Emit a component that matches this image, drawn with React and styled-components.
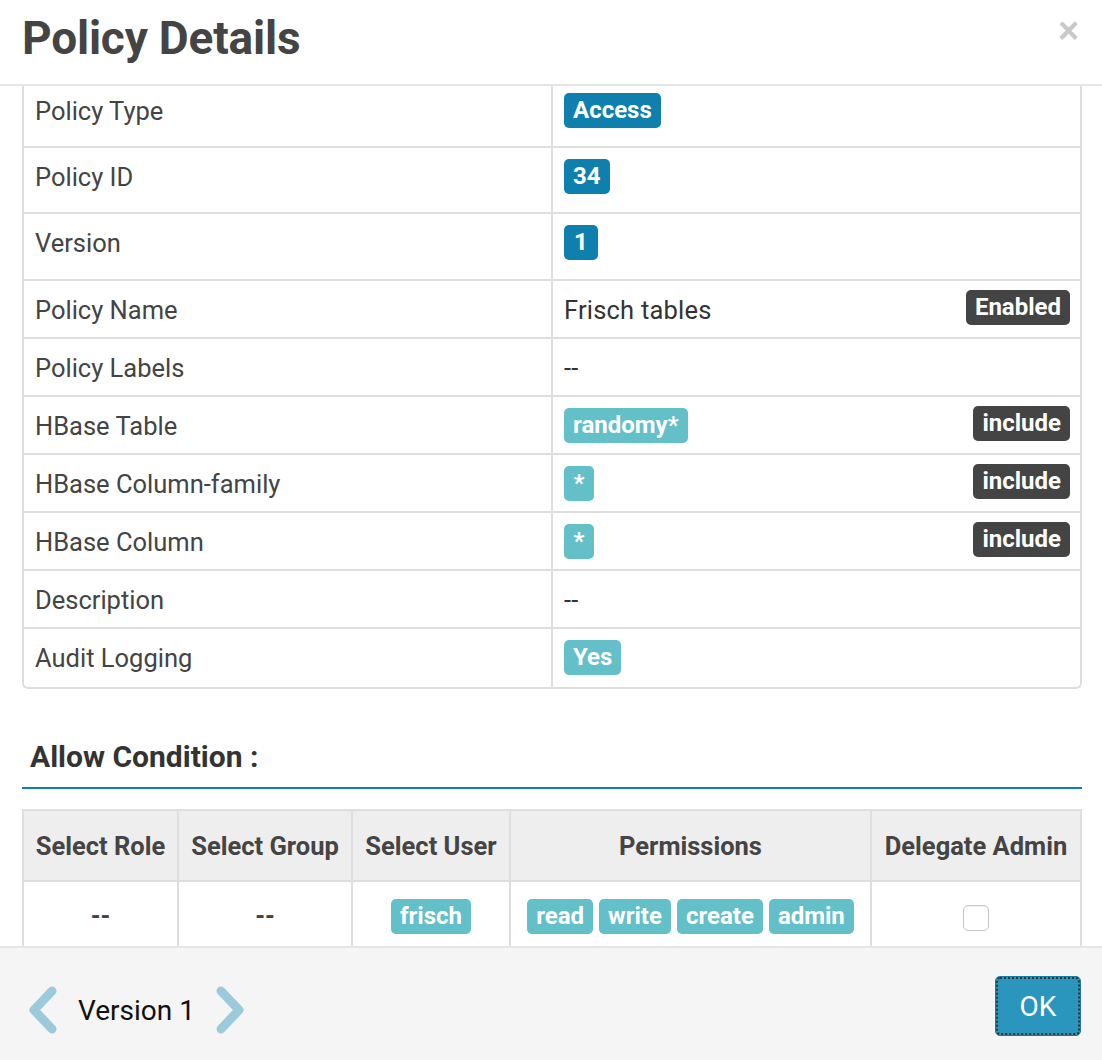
import React from 'react';
import styled, { createGlobalStyle } from 'styled-components';

const GlobalStyle = createGlobalStyle`
  html, body {
    margin: 0;
    padding: 0;
    background: #fff;
  }
  body {
    font-family: Roboto, "Liberation Sans", Arial, sans-serif;
    color: #444;
  }
`;

const Modal = styled.div`
  width: 1102px;
  height: 1060px;
  display: flex;
  flex-direction: column;
  background: #fff;
  overflow: hidden;
`;

const Header = styled.div`
  height: 84px;
  flex: none;
  display: flex;
  align-items: center;
  justify-content: space-between;
  padding: 0 22px;
  border-bottom: 2px solid #e5e5e5;
  box-sizing: content-box;
`;

const Title = styled.h3`
  margin: 0;
  margin-top: -8px;
  font-size: 46px;
  font-weight: 700;
  color: #444;
  letter-spacing: -0.2px;
`;

const Close = styled.button`
  border: 0;
  background: none;
  padding: 0;
  margin-top: -22px;
  margin-right: 1px;
  font-family: "Liberation Sans", Arial, sans-serif;
  font-size: 36px;
  font-weight: 700;
  line-height: 1;
  color: #c8c8c8;
  cursor: pointer;
`;

const Body = styled.div`
  flex: 1;
  overflow: hidden;
  padding: 0 20px 0 22px;
`;

const DetailBox = styled.div`
  margin-top: -4px;
  display: grid;
  grid-template-columns: 529px 1fr;
  border: 2px solid #dedede;
  border-top: 0;
  border-radius: 0 0 6px 6px;
`;

const Cell = styled.div`
  box-sizing: border-box;
  height: ${(p) => p.$h}px;
  padding: 11px 10px 0 11px;
  border-bottom: ${(p) => (p.$last ? '0' : '2px solid #dedede')};
  border-right: ${(p) => (p.$label ? '2px solid #dedede' : '0')};
  font-size: 25.5px;
  line-height: 36px;
  color: #444;
  display: flex;
  align-items: flex-start;
  justify-content: space-between;
`;

const ValueText = styled.span`
  color: #333;
  letter-spacing: 0.2px;
`;

const colors = {
  blue: '#0f7fad',
  teal: '#63c0c8',
  dark: '#444',
};

const Badge = styled.span`
  display: inline-block;
  box-sizing: border-box;
  height: 35px;
  min-width: ${(p) => (p.$min ? p.$min : 0)}px;
  text-align: center;
  padding: 0 9px;
  margin-top: ${(p) => (p.$up ? -2 : 0)}px;
  border-radius: 5px;
  background: ${(p) => colors[p.$tone]};
  color: #fff;
  font-weight: 700;
  font-size: 24px;
  line-height: 35px;
  white-space: nowrap;
`;

const SectionTitle = styled.h4`
  margin: 50px 0 20px;
  padding: 0 0 12px 8px;
  font-size: 30px;
  line-height: 36px;
  font-weight: 700;
  color: #333;
  border-bottom: 2px solid #0f7fad;
`;

const PermTable = styled.table`
  width: 100%;
  border-collapse: collapse;
  table-layout: fixed;
  border: 2px solid #dedede;
`;

const Th = styled.th`
  height: 69px;
  padding: 0 4px;
  background: #eee;
  border: 2px solid #dedede;
  font-size: 25.5px;
  font-weight: 700;
  color: #444;
  text-align: center;
  white-space: nowrap;
`;

const Td = styled.td`
  height: 68px;
  padding: 0 4px;
  border: 2px solid #dedede;
  text-align: center;
  vertical-align: middle;
  font-size: 25px;
  font-weight: 700;
  color: #444;
`;

const Chips = styled.div`
  display: flex;
  justify-content: center;
  gap: 6px;
`;

const Check = styled.span`
  display: inline-block;
  width: 24px;
  height: 24px;
  border: 1px solid #c6c6c6;
  border-radius: 5px;
  background: #fff;
  box-shadow: inset 0 1px 2px rgba(0, 0, 0, 0.06);
  vertical-align: middle;
`;

const Footer = styled.div`
  height: 112px;
  flex: none;
  display: flex;
  align-items: center;
  justify-content: space-between;
  padding: 0 21px 0 26px;
  background: #f5f5f5;
  border-top: 2px solid #e5e5e5;
`;

const Pager = styled.div`
  display: flex;
  align-items: center;
  gap: 18px;
  margin-top: 12px;
  font-size: 28px;
  color: #111;
`;

const Chevron = styled.svg`
  width: 34px;
  height: 48px;
  display: block;
`;

const OkButton = styled.button`
  width: 86px;
  height: 60px;
  margin-top: 4px;
  background: #2a96bd;
  border: 1px solid #1a7ca0;
  border-radius: 5px;
  outline: 2px dotted #333;
  outline-offset: -3px;
  color: #fff;
  font-family: Roboto, "Liberation Sans", Arial, sans-serif;
  font-size: 28px;
  cursor: pointer;
`;

const rows = [
  { label: 'Policy Type', h: 66, value: <Badge $tone="blue">Access</Badge> },
  { label: 'Policy ID', h: 66, value: <Badge $tone="blue">34</Badge> },
  { label: 'Version', h: 67, value: <Badge $tone="blue" $min={34}>1</Badge> },
  {
    label: 'Policy Name',
    h: 58,
    value: <ValueText>Frisch tables</ValueText>,
    right: <Badge $tone="dark" $up>Enabled</Badge>,
  },
  { label: 'Policy Labels', h: 58, value: <ValueText>--</ValueText> },
  {
    label: 'HBase Table',
    h: 58,
    value: <Badge $tone="teal">randomy*</Badge>,
    right: <Badge $tone="dark" $up>include</Badge>,
  },
  {
    label: 'HBase Column-family',
    h: 58,
    value: <Badge $tone="teal" $min={30}>*</Badge>,
    right: <Badge $tone="dark" $up>include</Badge>,
  },
  {
    label: 'HBase Column',
    h: 58,
    value: <Badge $tone="teal" $min={30}>*</Badge>,
    right: <Badge $tone="dark" $up>include</Badge>,
  },
  { label: 'Description', h: 58, value: <ValueText>--</ValueText> },
  { label: 'Audit Logging', h: 58, value: <Badge $tone="teal">Yes</Badge> },
];

const LeftChevron = () => (
  <Chevron viewBox="0 0 34 48">
    <path d="M26 5 L8 24 L26 43" fill="none" stroke="#9ccadd" strokeWidth="9" strokeLinecap="round" strokeLinejoin="round" />
  </Chevron>
);

const RightChevron = () => (
  <Chevron viewBox="0 0 34 48">
    <path d="M8 5 L26 24 L8 43" fill="none" stroke="#9ccadd" strokeWidth="9" strokeLinecap="round" strokeLinejoin="round" />
  </Chevron>
);

const App = () => {
  return (
    <Modal>
      <GlobalStyle />
      <Header>
        <Title>Policy Details</Title>
        <Close>×</Close>
      </Header>
      <Body>
        <DetailBox>
          {rows.map((r, idx) => {
            const last = idx === rows.length - 1;
            return (
              <React.Fragment key={r.label}>
                <Cell $h={r.h} $label $last={last}>{r.label}</Cell>
                <Cell $h={r.h} $last={last}>
                  {r.value}
                  {r.right}
                </Cell>
              </React.Fragment>
            );
          })}
        </DetailBox>
        <SectionTitle>Allow Condition :</SectionTitle>
        <PermTable>
          <colgroup>
            <col style={{ width: 155 }} />
            <col style={{ width: 174 }} />
            <col style={{ width: 158 }} />
            <col style={{ width: 361 }} />
            <col style={{ width: 210 }} />
          </colgroup>
          <thead>
            <tr>
              <Th>Select Role</Th>
              <Th>Select Group</Th>
              <Th>Select User</Th>
              <Th>Permissions</Th>
              <Th>Delegate Admin</Th>
            </tr>
          </thead>
          <tbody>
            <tr>
              <Td>--</Td>
              <Td>--</Td>
              <Td>
                <Badge $tone="teal">frisch</Badge>
              </Td>
              <Td>
                <Chips>
                  {['read', 'write', 'create', 'admin'].map((p) => (
                    <Badge key={p} $tone="teal">{p}</Badge>
                  ))}
                </Chips>
              </Td>
              <Td>
                <Check />
              </Td>
            </tr>
          </tbody>
        </PermTable>
      </Body>
      <Footer>
        <Pager>
          <LeftChevron />
          <span>Version 1</span>
          <RightChevron />
        </Pager>
        <OkButton>OK</OkButton>
      </Footer>
    </Modal>
  );
};

export default App;
